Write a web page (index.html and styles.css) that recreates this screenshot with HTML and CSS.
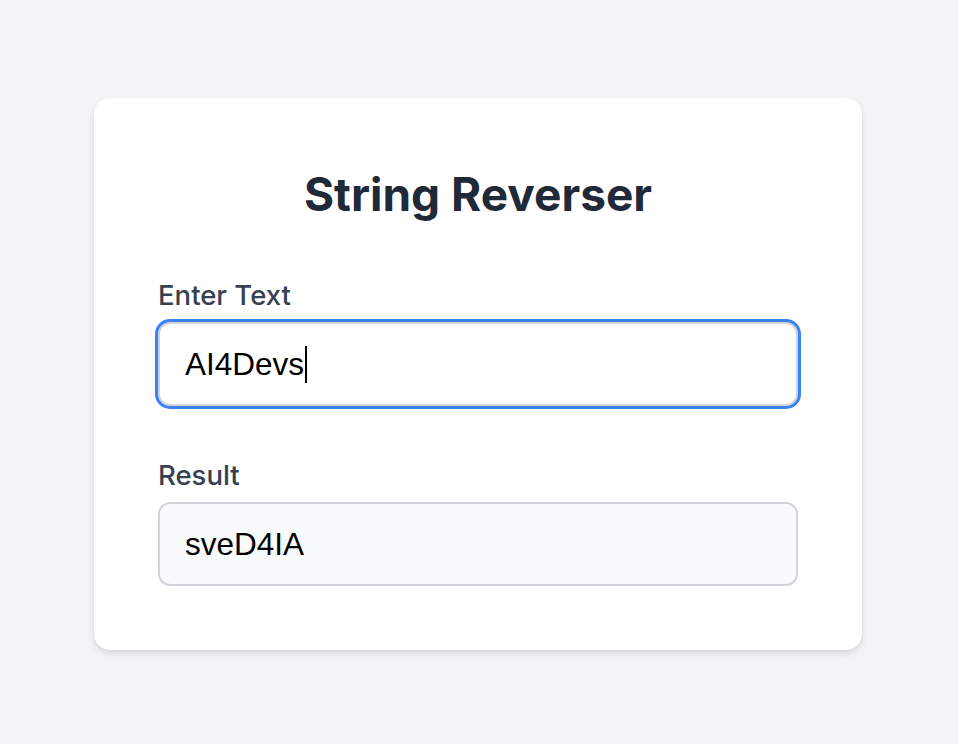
FILE: index.html
```html
<!DOCTYPE html>
<html lang="en">
<head>
<meta charset="utf-8">
<title>String Reverser</title>
<link rel="stylesheet" href="styles.css">
</head>
<body>
<main class="page">
  <section class="card">
    <h1 class="title">String Reverser</h1>
    <div class="field">
      <label class="label" for="text">Enter Text</label>
      <div class="input focused">AI4Devs<span class="caret"></span></div>
    </div>
    <div class="field">
      <label class="label">Result</label>
      <div class="output">sveD4IA</div>
    </div>
  </section>
</main>
</body>
</html>
```
FILE: styles.css
```css
html, body {
  margin: 0;
  padding: 0;
  background: #f3f4f6;
}
.page {
  min-height: 744px;
  padding-top: 98px;
  box-sizing: border-box;
  font-family: Inter, "Noto Sans", sans-serif;
}
.card {
  width: 768px;
  margin-left: 94px;
  box-sizing: border-box;
  background: #ffffff;
  border-radius: 16px;
  box-shadow: 0 4px 8px -1px rgba(0,0,0,0.1), 0 2px 6px -2px rgba(0,0,0,0.1);
  padding: 64px;
  display: flex;
  flex-direction: column;
}
.title {
  margin: 0 0 50px 0;
  text-align: center;
  font-size: 46px;
  line-height: 65px;
  font-weight: 700;
  color: #1f2937;
}
.field {
  display: flex;
  flex-direction: column;
}
.field + .field {
  margin-top: 51px;
}
.label {
  font-size: 27.5px;
  line-height: 36px;
  font-weight: 500;
  color: #374151;
  margin-bottom: 9px;
}
.input, .output {
  height: 84px;
  box-sizing: border-box;
  border: 2px solid #d1d5db;
  border-radius: 12px;
  padding: 0 25px;
  display: flex;
  align-items: center;
  font-family: "Liberation Sans", Arial, sans-serif;
  font-size: 31.5px;
  color: #000;
}
.input {
  background: #fff;
}
.focused {
  box-shadow: 0 0 0 3px #3b82f6;
}
.output {
  background: #f9fafb;
}
.caret {
  display: inline-block;
  width: 2px;
  height: 37px;
  background: #000;
  margin-left: 1px;
}
```
